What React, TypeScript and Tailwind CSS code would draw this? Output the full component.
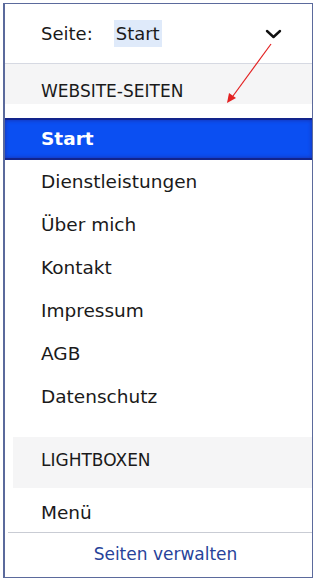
import React from 'react';

const pages = ['Dienstleistungen', 'Über mich', 'Kontakt', 'Impressum', 'AGB', 'Datenschutz'];

const App: React.FC = () => {
  return (
    <div className="w-[318px] h-[581px] bg-white pt-[3px] pl-[3px] pr-[5px] pb-[3px] font-['DejaVu_Sans',sans-serif] text-[#1a1a1a] relative">
      <div className="h-full flex flex-col border-l-2 border-y border-r border-[#5b6a9c]">
        <div className="h-[60px] flex items-center pl-[36px] pr-[30px] border-b border-[#d6d9e2] text-[18px]">
          <span>Seite:</span>
          <span className="ml-[21px] px-[2px] bg-[#dfeafa]">Start</span>
          <svg className="ml-auto" width="17" height="10" viewBox="0 0 17 10" fill="none">
            <path d="M2 2l6.5 6L15 2" stroke="#111" strokeWidth="2.4" strokeLinecap="round" strokeLinejoin="round" />
          </svg>
        </div>

        <div className="h-[40px] bg-[#f5f5f6] pl-[36px] pt-[17px] text-[17px] leading-[20px]">WEBSITE-SEITEN</div>

        <div className="mt-[14px] h-[42px] flex items-center pl-[36px] bg-[#0b4ff2] border-y-2 border-[#12248c] shadow-[inset_0_0_4px_#1a2fa8] text-white text-[18.5px] font-bold">
          Start
        </div>
        {pages.map((p) => (
          <div key={p} className="h-[43px] flex items-center pl-[36px] text-[18.5px]">
            {p}
          </div>
        ))}

        <div className="mt-[19px] ml-[8px] h-[51px] bg-[#f5f5f6] pl-[28px] pb-[4px] flex items-center text-[17px]">LIGHTBOXEN</div>
        <div className="h-[44px] flex items-center pl-[36px] pt-[6px] text-[18.5px]">Menü</div>
        <div className="ml-[3px] border-t border-[#c9ccd4]" />
        <div className="flex-1 flex items-center justify-center pl-[14px] text-[17px] text-[#27439a]">Seiten verwalten</div>
      </div>

      <svg className="absolute left-0 top-0 pointer-events-none" width="318" height="581" viewBox="0 0 318 581">
        <line x1="271" y1="44" x2="233" y2="96" stroke="#e32222" strokeWidth="1.2" />
        <polygon points="227,103 229,93 236,98" fill="#e32222" />
      </svg>
    </div>
  );
};

export default App;
